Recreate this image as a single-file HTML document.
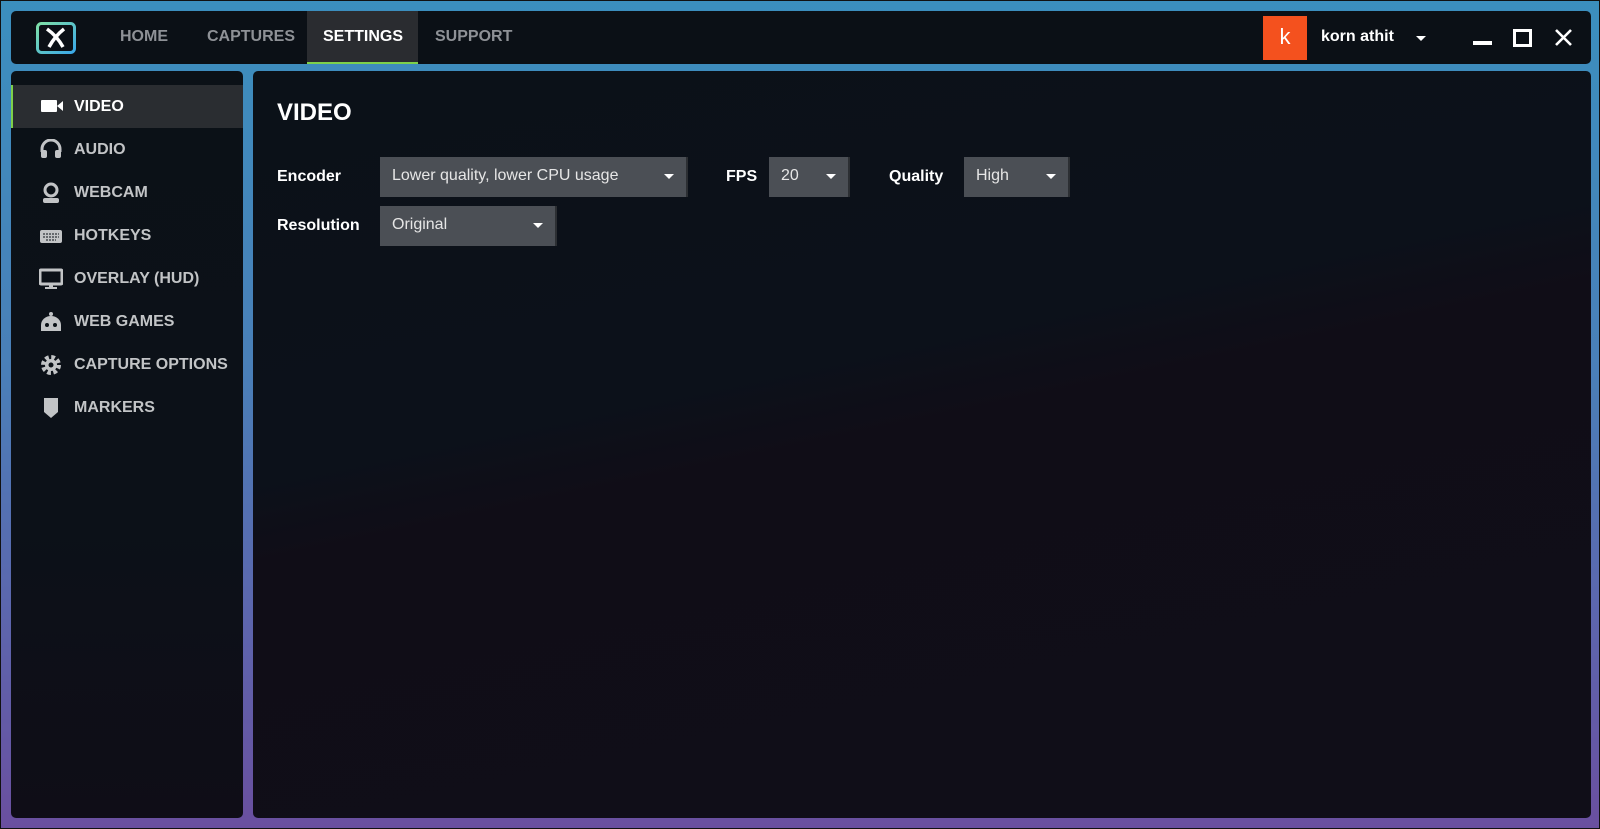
<!DOCTYPE html>
<html><head><meta charset="utf-8"><style>
*{margin:0;padding:0;box-sizing:border-box}
html,body{width:1600px;height:829px;overflow:hidden}
body{background:linear-gradient(180deg,#3b8fbe 0%,#4a7fb8 45%,#5d65ad 75%,#6a4f9f 100%);font-family:"Liberation Sans",sans-serif;position:relative;border:1px solid #111}
.hdr{position:absolute;left:10px;top:10px;width:1580px;height:53px;background:#0b1016;border-radius:5px}
.nav{position:absolute;top:0;height:53px;line-height:52px;font-size:16px;font-weight:bold;color:#8e9196}
.set{background:#2a2c30;color:#fff;border-bottom:2px solid #7ed04a;padding:0 16px}
.side{position:absolute;left:10px;top:70px;width:232px;height:747px;border-radius:5px;background:linear-gradient(180deg,#0b1117 0%,#0c1118 60%,#0f0d17 100%)}
.main{position:absolute;left:252px;top:70px;width:1338px;height:747px;border-radius:5px;background:linear-gradient(168deg,#0b1118 0%,#0c111a 40%,#100d17 48%,#100e18 100%)}
.it{position:absolute;left:0;width:232px;height:43px;line-height:43px;font-size:16px;font-weight:bold;color:#c2c4c6}
.it span{position:absolute;left:63px}
.it svg{position:absolute;left:28px;top:11px}
.act{background:#2a2d31;color:#fff;border-left:2px solid #7ed04a}
.lbl{position:absolute;font-size:16px;font-weight:bold;color:#fff}
.sel{position:absolute;height:40px;background:#4b4f55;border-right:2px solid #2c2f33;color:#e6e6e6;font-size:16px;line-height:38px;padding-left:12px}
.sel:after{content:"";position:absolute;right:12px;top:17px;border-left:5px solid transparent;border-right:5px solid transparent;border-top:5px solid #fff}
</style></head><body>
<div class="hdr">
 <svg style="position:absolute;left:25px;top:11px" width="40" height="32" viewBox="0 0 40 32"><defs><linearGradient id="g" x1="0" y1="0" x2="1" y2="1"><stop offset="0" stop-color="#7fe0a8"/><stop offset="1" stop-color="#3aa8e8"/></linearGradient></defs><rect x="1.5" y="1.5" width="37" height="29" rx="4" fill="none" stroke="url(#g)" stroke-width="3"/><path d="M11 7 Q21 14 27 25 M28 7 Q19 14 13 25" stroke="#fff" stroke-width="3.5" fill="none"/></svg>
 <div class="nav" style="left:109px">HOME</div>
 <div class="nav" style="left:196px">CAPTURES</div>
 <div class="nav set" style="left:296px;width:111px">SETTINGS</div>
 <div class="nav" style="left:424px">SUPPORT</div>
 <div style="position:absolute;left:1252px;top:5px;width:44px;height:44px;background:#f4511e;color:#fff;font-size:22px;text-align:center;line-height:42px">k</div>
 <div class="nav" style="left:1310px;color:#fff">korn athit</div>
 <div style="position:absolute;left:1405px;top:25px;border-left:5px solid transparent;border-right:5px solid transparent;border-top:5px solid #fff"></div>
 <div style="position:absolute;left:1462px;top:30px;width:19px;height:4px;background:#fff"></div>
 <div style="position:absolute;left:1502px;top:18px;width:19px;height:18px;border:3px solid #fff"></div>
 <svg style="position:absolute;left:1543px;top:17px" width="19" height="19"><path d="M2 2L17 17M17 2L2 17" stroke="#fff" stroke-width="2.6"/></svg>
</div>
<div class="side">
 <div class="it act" style="top:14px"><svg width="24" height="20" viewBox="0 0 24 20"><rect x="0" y="4" width="16" height="12" rx="1" fill="#fff"/><path d="M16 10L22 5V15Z" fill="#fff"/></svg><span style="left:61px">VIDEO</span></div>
 <div class="it" style="top:57px"><svg width="24" height="22" viewBox="0 0 24 22"><path d="M3 13V10a9 9 0 0 1 18 0v3" stroke="#c2c4c6" stroke-width="3" fill="none"/><rect x="2" y="11" width="6" height="8" rx="2" fill="#c2c4c6"/><rect x="16" y="11" width="6" height="8" rx="2" fill="#c2c4c6"/></svg><span>AUDIO</span></div>
 <div class="it" style="top:100px"><svg width="24" height="22" viewBox="0 0 24 22"><circle cx="12" cy="8" r="6" stroke="#c2c4c6" stroke-width="3" fill="none"/><rect x="4" y="16" width="16" height="5" rx="2" fill="#c2c4c6"/></svg><span>WEBCAM</span></div>
 <div class="it" style="top:143px"><svg width="24" height="22" viewBox="0 0 24 22"><rect x="1" y="5" width="22" height="13" rx="2" fill="#c2c4c6"/><path d="M4 9h16M4 12h16M7 15h10" stroke="#0b1117" stroke-width="1" stroke-dasharray="2 1"/></svg><span>HOTKEYS</span></div>
 <div class="it" style="top:186px"><svg width="24" height="22" viewBox="0 0 24 22"><rect x="1" y="2" width="22" height="14" rx="1" stroke="#c2c4c6" stroke-width="3" fill="none"/><rect x="10" y="16" width="4" height="3" fill="#c2c4c6"/><rect x="6" y="19" width="12" height="2" fill="#c2c4c6"/></svg><span>OVERLAY (HUD)</span></div>
 <div class="it" style="top:229px"><svg width="24" height="22" viewBox="0 0 24 22"><circle cx="12" cy="3" r="2" fill="#c2c4c6"/><path d="M2 20V14a10 9 0 0 1 20 0v6Z" fill="#c2c4c6"/><circle cx="8" cy="14" r="2" fill="#0b1117"/><circle cx="16" cy="14" r="2" fill="#0b1117"/></svg><span>WEB GAMES</span></div>
 <div class="it" style="top:272px"><svg width="24" height="22" viewBox="0 0 24 22"><circle cx="12" cy="11" r="7" fill="none" stroke="#c2c4c6" stroke-width="6" stroke-dasharray="3.3 2.2"/><circle cx="12" cy="11" r="6" fill="#c2c4c6"/><circle cx="12" cy="11" r="2.5" fill="#0b1117"/></svg><span>CAPTURE OPTIONS</span></div>
 <div class="it" style="top:315px"><svg width="24" height="22" viewBox="0 0 24 22"><path d="M5 1H19V15L12 21L5 15Z" fill="#c2c4c6"/></svg><span>MARKERS</span></div>
</div>
<div class="main">
 <div style="position:absolute;left:24px;top:28px;font-size:24px;font-weight:bold;color:#fff">VIDEO</div>
 <div class="lbl" style="left:24px;top:97px">Encoder</div>
 <div class="sel" style="left:127px;top:86px;width:308px">Lower quality, lower CPU usage</div>
 <div class="lbl" style="left:473px;top:97px">FPS</div>
 <div class="sel" style="left:516px;top:86px;width:81px">20</div>
 <div class="lbl" style="left:636px;top:97px">Quality</div>
 <div class="sel" style="left:711px;top:86px;width:106px">High</div>
 <div class="lbl" style="left:24px;top:146px">Resolution</div>
 <div class="sel" style="left:127px;top:135px;width:177px">Original</div>
</div>
</body></html>
